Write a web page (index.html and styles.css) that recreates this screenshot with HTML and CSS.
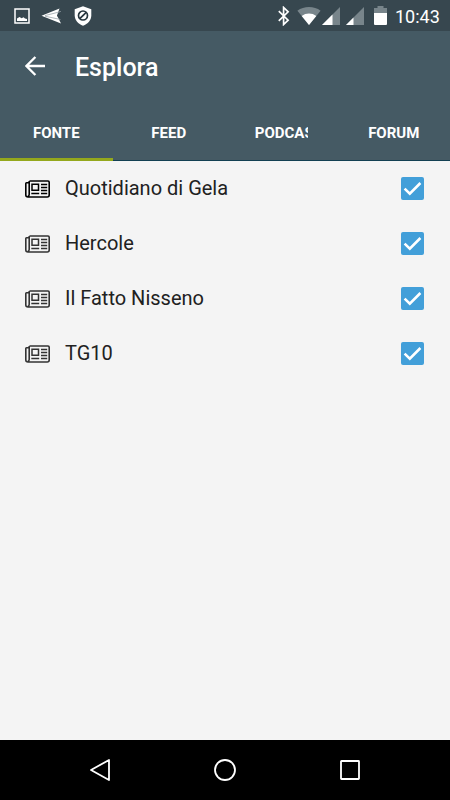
FILE: index.html
```html
<!DOCTYPE html>
<html lang="it">
  <head>
    <meta charset="UTF-8" />
    <meta name="viewport" content="width=device-width, initial-scale=1.0" />
    <title>Esplora</title>
    <link rel="stylesheet" href="styles.css">
  </head>
  <body>
    <!-- shared icons -->
    <svg class="defs" width="0" height="0">
      <symbol id="news" viewBox="0 0 25 18">
        <path d="M4.5 1H23q1.200 0 1.200 1.200V15q0 2-2 2H3Q.8 17 .8 15V3.400q0-.7.7-.7H4M4.200 1v13.600q0 1.600-1.500 2" fill="none" stroke="currentColor" stroke-width="1.600" />
        <path d="M7 4.200h6.500v6H7z" fill="none" stroke="currentColor" stroke-width="1.500" />
        <path d="M16 4.500h6.200M16 7.500h6.200M16 10.500h6.200M6.300 13.500h7.900M16 13.500h6.200" stroke="currentColor" stroke-width="1.400" />
      </symbol>
      <symbol id="check" viewBox="0 0 23 23">
        <path d="M3.600 11.600l5.200 5L19.400 6" fill="none" stroke="#fff" stroke-width="2.600" />
      </symbol>
    </svg>

    <div class="status-bar">
      <div class="notifications">
        <svg width="16" height="16" viewBox="0 0 16 16">
          <rect x="1" y="1" width="14" height="14" fill="none" stroke="#fff" stroke-width="1.5" />
          <path d="M3 13v-2.500L5.500 9l2.200 1.200 1.800-1 1.500 1.300 2 .5v2z" fill="#fff" />
        </svg>
        <svg width="22" height="18" viewBox="0 0 22 18">
          <path d="M.5 8.800L18.500 1.500 16 8.500 20 16.500z" fill="#fff" />
          <path d="M4 8.600L20 4.500M4 9.200l15.500 3.300" stroke="#9aa5aa" stroke-width=".8" />
          <path d="M21 3.500l-5 5.300 5 4.700z" fill="#37474f" />
        </svg>
        <svg width="18" height="20" viewBox="0 0 18 20">
          <path d="M9 .3l8.300 3v6c0 5-3.500 8.600-8.300 10.400C4.200 17.900.7 14.300.7 9.300v-6z" fill="#fff" />
          <circle cx="9" cy="9.500" r="4.500" fill="none" stroke="#26363e" stroke-width="1.700" />
          <path d="M5.800 12.700l6.400-6.400" stroke="#26363e" stroke-width="1.700" />
        </svg>
      </div>
      <div class="system">
        <svg class="bluetooth" width="13" height="20" viewBox="0 0 13 20">
          <path d="M1.800 5.200l9.300 9-4.500 4.300v-17l4.500 4.300-9.300 9" fill="none" stroke="#fff" stroke-width="1.700" />
        </svg>
        <svg class="wifi" width="24" height="18" viewBox="0 0 24 18">
          <path d="M12 18L.4 3.700C7-1.100 17-1.100 23.600 3.700z" fill="#78858b" />
          <path d="M12 18L4.700 9c4.300-3.300 10.300-3.300 14.600 0z" fill="#fff" />
        </svg>
        <svg class="signal" width="18" height="18" viewBox="0 0 18 18">
          <path d="M0 18L18 0v18z" fill="#78858b" />
          <path d="M0 18l10.500-10.500V18z" fill="#fff" />
        </svg>
        <svg class="signal second" width="18" height="18" viewBox="0 0 18 18">
          <path d="M0 18L18 0v18z" fill="#78858b" />
          <path d="M0 18l7.500-7.500V18z" fill="#fff" />
        </svg>
        <svg class="battery" width="13" height="19" viewBox="0 0 13 19">
          <path d="M0 2h3.500V0h6v2H13v6H0z" fill="#78858b" />
          <path d="M0 7h13v11q0 1-1 1H1q-1 0-1-1z" fill="#fff" />
        </svg>
        <span class="clock">10:43</span>
      </div>
    </div>

    <header>
      <div class="toolbar">
        <svg class="back" width="20" height="20" viewBox="0 0 20 20">
          <path d="M20 10H1.800M10.400 1l-9 9 9 9" fill="none" stroke="#fff" stroke-width="2.400" />
        </svg>
        <h1>Esplora</h1>
      </div>
      <nav class="tabs">
        <div class="tab active"><span>FONTE</span></div>
        <div class="tab"><span>FEED</span></div>
        <div class="tab"><span class="clipped">PODCAST</span></div>
        <div class="tab"><span>FORUM</span></div>
      </nav>
    </header>

    <main>
      <div class="row selected">
        <svg class="news"><use href="#news" /></svg>
        <span class="name">Quotidiano di Gela</span>
        <svg class="checkbox"><use href="#check" /></svg>
      </div>
      <div class="row">
        <svg class="news"><use href="#news" /></svg>
        <span class="name">Hercole</span>
        <svg class="checkbox"><use href="#check" /></svg>
      </div>
      <div class="row">
        <svg class="news"><use href="#news" /></svg>
        <span class="name">Il Fatto Nisseno</span>
        <svg class="checkbox"><use href="#check" /></svg>
      </div>
      <div class="row">
        <svg class="news"><use href="#news" /></svg>
        <span class="name">TG10</span>
        <svg class="checkbox"><use href="#check" /></svg>
      </div>
    </main>

    <footer>
      <svg width="22" height="24" viewBox="0 0 22 24">
        <path d="M20 2v20L2 12z" fill="none" stroke="#fff" stroke-width="1.800" stroke-linejoin="round" />
      </svg>
      <svg width="24" height="24" viewBox="0 0 24 24">
        <circle cx="12" cy="12" r="10" fill="none" stroke="#fff" stroke-width="1.800" />
      </svg>
      <svg width="22" height="22" viewBox="0 0 22 22">
        <rect x="2" y="2" width="18" height="18" rx=".5" fill="none" stroke="#fff" stroke-width="1.800" />
      </svg>
    </footer>
  </body>
</html>
```
FILE: styles.css
```css
* {
  box-sizing: border-box;
}
body {
  margin: 0;
  height: 800px;
  display: flex;
  flex-direction: column;
  font-family: Roboto, sans-serif;
  background-color: #f4f4f4;
  overflow: hidden;
}
svg {
  display: block;
  flex: none;
}
.defs {
  position: absolute;
}
.status-bar {
  height: 31px;
  display: flex;
  justify-content: space-between;
  padding: 0 10px 0 14px;
  background-color: #37474f;
}
.notifications,
.system {
  display: flex;
  align-items: center;
}
.notifications {
  gap: 11px;
}
.wifi {
  margin-left: 7px;
}
.signal {
  margin-left: 1px;
}
.signal.second {
  margin-left: 6px;
}
.battery {
  margin-left: 10px;
}
.clock {
  width: 45px;
  margin-left: 8px;
  padding-top: 1px;
  color: #fff;
  font-size: 18px;
  white-space: nowrap;
}
header {
  height: 130px;
  color: #fff;
  background-color: #455a64;
  border-bottom: 1px solid #124052;
}
.toolbar {
  height: 73px;
  display: flex;
  align-items: center;
  padding-left: 25px;
}
h1 {
  margin: 0 0 0 30px;
  font-size: 25px;
  font-weight: 500;
}
.back {
  margin-bottom: 3px;
}
.tabs {
  height: 57px;
  display: grid;
  grid-template-columns: repeat(4, 1fr);
}
.tab {
  display: flex;
  align-items: center;
  justify-content: center;
  font-size: 15px;
  font-weight: 700;
}
.tab.active {
  border-bottom: 3px solid #94a81c;
  padding-top: 3px;
}
.clipped {
  width: 53px;
  overflow: hidden;
}
main {
  flex: 1;
}
.row {
  height: 55px;
  display: flex;
  align-items: center;
  padding: 0 26px 0 25px;
}
.news {
  width: 25px;
  height: 18px;
  color: #333;
}
.selected .news {
  color: #000;
}
.name {
  flex: 1;
  margin-left: 15px;
  padding-bottom: 2px;
  color: #212121;
  font-size: 20px;
}
.checkbox {
  width: 23px;
  height: 23px;
  border-radius: 2px;
  background-color: #429fd9;
}
footer {
  height: 60px;
  display: flex;
  align-items: center;
  justify-content: space-between;
  padding: 0 89px;
  background-color: #000;
}
```
